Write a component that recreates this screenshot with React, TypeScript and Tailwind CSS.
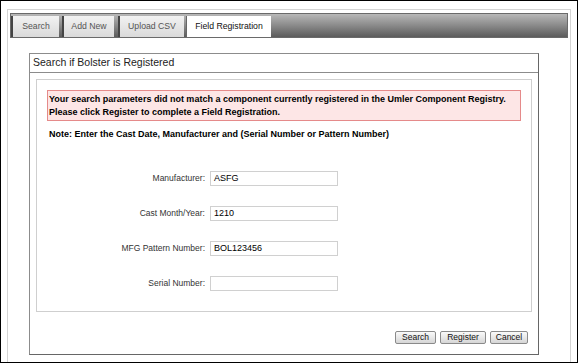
import React from "react";

const TABS = [
  { label: "Search", w: "w-[48px]", ml: "ml-0" },
  { label: "Add New", w: "w-[52px]", ml: "ml-[3px]" },
  { label: "Upload CSV", w: "w-[66px]", ml: "ml-[4px]" },
  { label: "Field Registration", w: "w-[85px]", ml: "ml-[2px]" },
];

const FIELDS = [
  { label: "Manufacturer:", value: "ASFG" },
  { label: "Cast Month/Year:", value: "1210" },
  { label: "MFG Pattern Number:", value: "BOL123456" },
  { label: "Serial Number:", value: "" },
];

const BUTTONS = [
  { label: "Search", w: "w-[41px]" },
  { label: "Register", w: "w-[46px]" },
  { label: "Cancel", w: "w-[38px]" },
];

export default function App() {
  return (
    <div
      className="w-[578px] h-[363px] border border-black bg-white overflow-hidden"
      style={{ fontFamily: '"Liberation Sans", Arial, sans-serif' }}
    >
      <div className="ml-[6px] mt-[8px] w-[564px] h-[360px] border-l border-t border-r border-[#d4d4d4] pt-[3px] px-[2px]">
        {/* tab bar */}
        <div className="h-[25px] flex items-end bg-gradient-to-b from-[#b8b8b8] via-[#8a8a8a] to-[#5c5c5c] border border-[#6a6a6a]">
          {TABS.map((t, i) =>
            i === TABS.length - 1 ? (
              <div
                key={t.label}
                className={`${t.w} ${t.ml} h-[21px] flex items-center justify-center bg-white border-l border-[#666] text-[8.7px] text-[#111]`}
              >
                {t.label}
              </div>
            ) : (
              <div
                key={t.label}
                className={`${t.w} ${t.ml} h-[21px] flex items-center justify-center bg-gradient-to-b from-[#f2f2f2] to-[#dadada] border-l-2 border-[#444] text-[8.7px] text-[#555]`}
              >
                {t.label}
              </div>
            )
          )}
        </div>

        {/* panel */}
        <div className="ml-[19px] mt-[15px] w-[510px] h-[302px] border border-[#8c8c8c] border-r-[#666] border-b-[#666] flex flex-col">
          <div className="h-[19px] flex items-center px-[3px] border-b border-[#8c8c8c] text-[10.5px] text-[#222]">
            Search if Bolster is Registered
          </div>

          <div className="mx-[6px] mt-[6px] h-[233px] border border-[#cfcfcf] px-[10px] pt-[10px]">
            <div className="h-[31px] bg-[#fde6e6] border border-[#e58a8a] px-[1px] pt-[2px] text-[9px] leading-[13px] font-bold text-black">
              <div>Your search parameters did not match a component currently registered in the Umler Component Registry.</div>
              <div>Please click Register to complete a Field Registration.</div>
            </div>
            <div className="mt-[7px] pl-[2px] text-[9px] font-bold text-black">
              Note: Enter the Cast Date, Manufacturer and (Serial Number or Pattern Number)
            </div>

            <div className="mt-[30px] flex flex-col gap-[21px]">
              {FIELDS.map((f) => (
                <div key={f.label} className="flex items-center h-[14px]">
                  <div className="w-[158px] text-right text-[8.5px] text-[#333]">{f.label}</div>
                  <div className="ml-[5px] w-[128px] h-[15px] border border-[#d0d0d0] flex items-center px-[3px] text-[9px] text-black">
                    {f.value}
                  </div>
                </div>
              ))}
            </div>
          </div>

          <div className="mt-[19px] flex justify-end gap-[4px] pr-[10px]">
            {BUTTONS.map((b) => (
              <button
                key={b.label}
                className={`${b.w} h-[13px] flex items-center justify-center bg-gradient-to-b from-[#fafafa] to-[#d6d6d6] border border-[#8a8a8a] rounded-[2px] text-[8.5px] leading-none text-[#111]`}
              >
                {b.label}
              </button>
            ))}
          </div>
        </div>
      </div>
    </div>
  );
}
